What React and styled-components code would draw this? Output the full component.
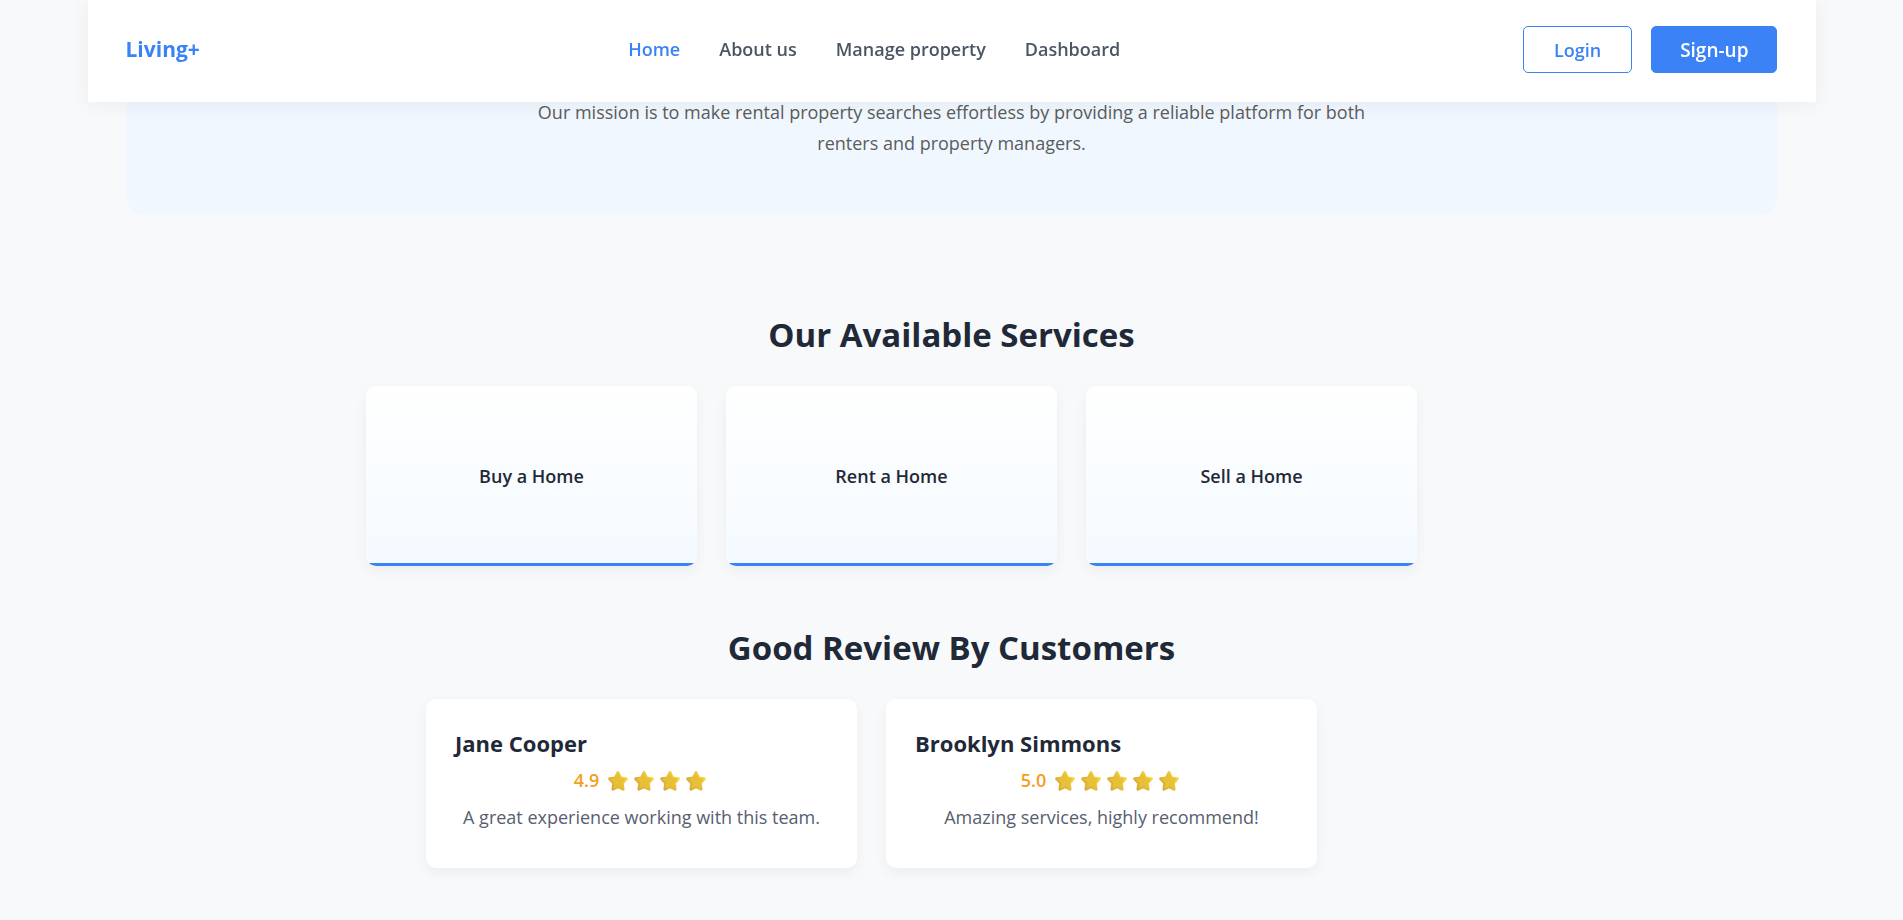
import React from "react";
import styled, { createGlobalStyle } from "styled-components";

const GlobalStyle = createGlobalStyle`
  *, *::before, *::after { box-sizing: border-box; }
  body {
    margin: 0;
    background: #f8f9fb;
    color: #1f2937;
    font-family: "Open Sans", "Noto Sans", sans-serif;
    font-size: 18px;
    line-height: 31px;
  }
`;

const Header = styled.header`
  position: fixed;
  top: 0;
  left: 0;
  right: 0;
  z-index: 10;
  max-width: 1728px;
  margin: 0 auto;
  padding: 26px 38px 29px;
  display: flex;
  align-items: center;
  justify-content: space-between;
  background: #ffffff;
  box-shadow: 0 2px 20px rgba(0, 0, 0, 0.06);
`;

const Logo = styled.a`
  min-width: 100px;
  color: #3b82f6;
  font-size: 21px;
  font-weight: 700;
  text-decoration: none;
`;

const Nav = styled.nav`
  display: flex;
  gap: 39px;
`;

const NavLink = styled.a`
  color: ${(p) => (p.$active ? "#3b82f6" : "#4b5563")};
  font-size: 18px;
  font-weight: 600;
  text-decoration: none;
`;

const Actions = styled.div`
  display: flex;
  gap: 19px;
`;

const Button = styled.button`
  height: 47px;
  padding: 0 ${(p) => (p.$primary ? 28 : 30)}px;
  border: 1px solid #3b82f6;
  border-radius: 5px;
  background: ${(p) => (p.$primary ? "#3b82f6" : "#ffffff")};
  color: ${(p) => (p.$primary ? "#ffffff" : "#3b82f6")};
  font-family: inherit;
  font-size: ${(p) => (p.$primary ? 19 : 18)}px;
  font-weight: 600;
  cursor: pointer;
`;

const Page = styled.main`
  max-width: 1728px;
  margin: 0 auto;
  padding: 0 38px 52px;
`;

const Mission = styled.section`
  padding: 97px 38px 56px;
  border-radius: 0 0 19px 19px;
  background: #f0f7ff;
`;

const MissionText = styled.p`
  max-width: 864px;
  margin: 0 auto;
  color: #5c5c5c;
  text-align: center;
`;

const Section = styled.section`
  padding-top: ${(p) => p.$space}px;
`;

const Title = styled.h2`
  margin: 0 0 28px;
  font-size: 33px;
  line-height: 46px;
  font-weight: 700;
  text-align: center;
`;

const CardRow = styled.div`
  display: flex;
  flex-wrap: wrap;
  gap: 29px;
  max-width: ${(p) => p.$width}px;
  margin: 0 auto;
`;

const Card = styled.article`
  border-radius: 10px;
  background: #ffffff;
  box-shadow: 0 5px 14px rgba(0, 0, 0, 0.05);
`;

const ServiceCard = styled(Card)`
  position: relative;
  display: flex;
  align-items: center;
  justify-content: center;
  flex: 0 1 331px;
  min-height: 180px;
  overflow: hidden;
  background: linear-gradient(to bottom, #ffffff, #f4faff);

  &::after {
    content: "";
    position: absolute;
    left: 0;
    right: 0;
    bottom: 0;
    height: 3px;
    background: #3b82f6;
  }
`;

const ServiceName = styled.h3`
  margin: 0;
  font-size: 18px;
  font-weight: 600;
`;

const ReviewCard = styled(Card)`
  flex: 0 1 431px;
  padding: 29px;
`;

const Reviewer = styled.h3`
  margin: 0 0 6px;
  font-size: 22px;
  line-height: 31px;
  font-weight: 700;
`;

const Rating = styled.div`
  display: flex;
  align-items: center;
  justify-content: center;
  margin-bottom: 6px;
  color: #f59e1b;
  font-size: 18px;
  font-weight: 600;
`;

const Stars = styled.span`
  display: flex;
  margin-left: 6px;
`;

const Quote = styled.p`
  margin: 0 0 6px;
  color: #566070;
  text-align: center;
`;

const STAR = "M13 4.6 L15.5 9.9 L21.4 10.8 L17.2 15.2 L18.1 21.2 L13 18.7 L7.9 21.2 L8.8 15.2 L4.6 10.8 L10.5 9.9 Z";

function Star() {
  return (
    <svg width="26" height="26" viewBox="0 0 26 26" aria-hidden="true">
      <defs>
        <linearGradient id="star-edge" x1="0" y1="0.8" x2="1" y2="0.2">
          <stop offset="0" stopColor="#d9a83a" />
          <stop offset="0.5" stopColor="#e6ba38" />
          <stop offset="1" stopColor="#fbdc45" />
        </linearGradient>
      </defs>
      <path d={STAR} fill="url(#star-edge)" stroke="url(#star-edge)" strokeWidth="3" strokeLinejoin="round" />
      <path d={STAR} fill="#e8c035" stroke="#e8c035" strokeLinejoin="round" transform="translate(2.6 2.3) scale(0.82)" />
    </svg>
  );
}

const NAV = ["Home", "About us", "Manage property", "Dashboard"];
const SERVICES = ["Buy a Home", "Rent a Home", "Sell a Home"];
const REVIEWS = [
  { name: "Jane Cooper", score: "4.9", stars: 4, text: "A great experience working with this team." },
  { name: "Brooklyn Simmons", score: "5.0", stars: 5, text: "Amazing services, highly recommend!" },
];

export default function App() {
  return (
    <>
      <GlobalStyle />
      <Header>
        <Logo href="#">Living+</Logo>
        <Nav>
          {NAV.map((item, i) => (
            <NavLink key={item} href="#" $active={i === 0}>{item}</NavLink>
          ))}
        </Nav>
        <Actions>
          <Button type="button">Login</Button>
          <Button type="button" $primary>Sign-up</Button>
        </Actions>
      </Header>
      <Page>
        <Mission>
          <MissionText>
            Our mission is to make rental property searches effortless by providing a reliable platform for both renters and property managers.
          </MissionText>
        </Mission>
        <Section $space={97}>
          <Title>Our Available Services</Title>
          <CardRow $width={1171}>
            {SERVICES.map((s) => (
              <ServiceCard key={s}><ServiceName>{s}</ServiceName></ServiceCard>
            ))}
          </CardRow>
        </Section>
        <Section $space={59}>
          <Title>Good Review By Customers</Title>
          <CardRow $width={1051}>
            {REVIEWS.map((r) => (
              <ReviewCard key={r.name}>
                <Reviewer>{r.name}</Reviewer>
                <Rating>
                  {r.score}
                  <Stars>{Array.from({ length: r.stars }, (_, i) => <Star key={i} />)}</Stars>
                </Rating>
                <Quote>{r.text}</Quote>
              </ReviewCard>
            ))}
          </CardRow>
        </Section>
      </Page>
    </>
  );
}
